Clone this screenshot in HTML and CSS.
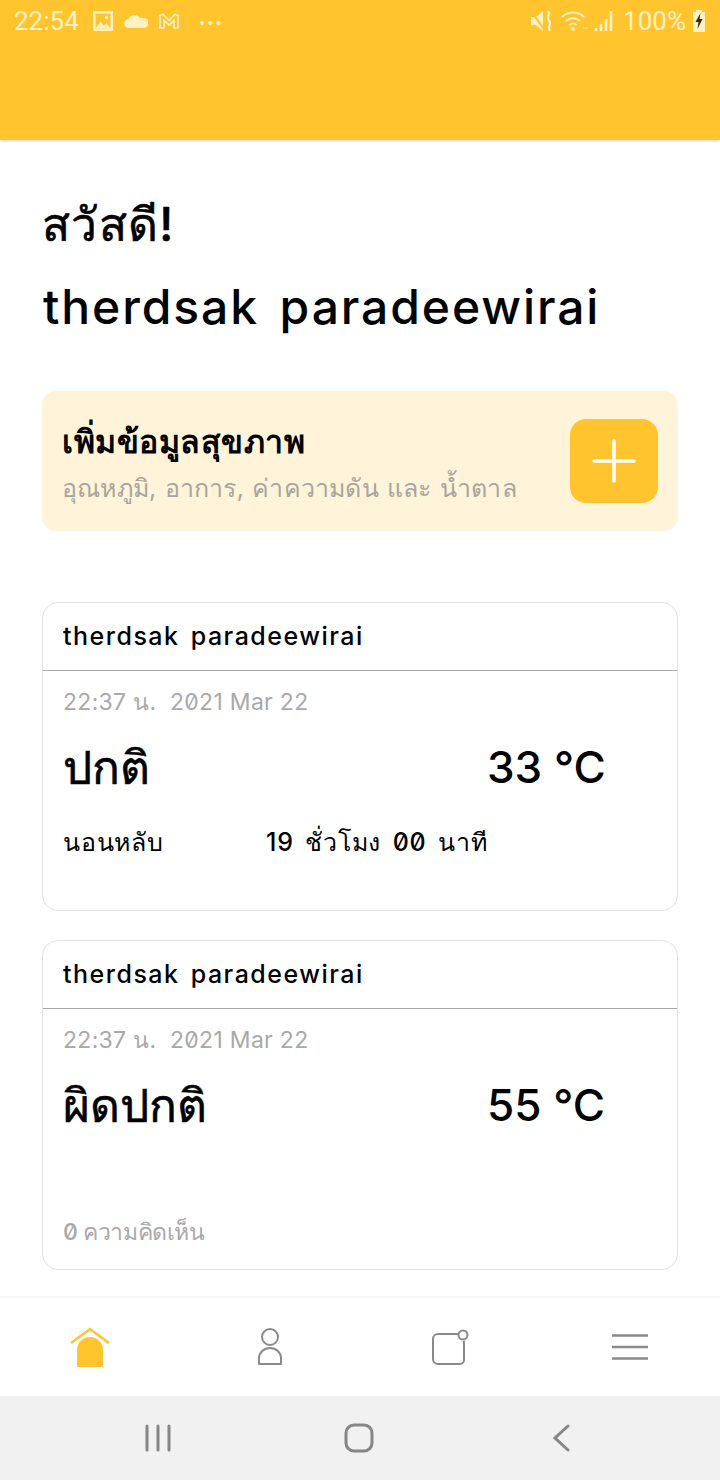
FILE: index.html
```html
<!DOCTYPE html>
<html lang="th">
<head>
  <meta charset="UTF-8">
  <meta name="viewport" content="width=device-width, initial-scale=1.0">
  <title>Health</title>
  <link rel="stylesheet" href="styles.css">
</head>
<body>
  <div class="topbar">
    <div class="status">
      <div class="status-left">
        <span class="clock">22:54</span>
        <svg class="ic" width="22" height="22" viewBox="0 0 22 22"><path d="M1 1h20v20H1z" fill="#fff1c4"/><path d="M3.500 3.500h15v15h-15z" fill="#ffc42e"/><path d="M3.500 18.500l5-7 3.500 4 2.500-2.500 4 5.500z" fill="#fff1c4"/><circle cx="14.500" cy="7.500" r="1.800" fill="#fff1c4"/></svg>
        <svg class="ic" width="24" height="14" viewBox="0 0 24 14"><path d="M5 14a4.500 4.500 0 0 1-.5-9A6.500 6.500 0 0 1 16 4a4 4 0 0 1 3 0 5 5 0 0 1 1 10z" fill="#fff1c4"/></svg>
        <svg class="ic" width="22" height="16" viewBox="0 0 22 16"><path d="M2 15V2.500l3-1 6 6 6-6 3 1V15h-4V7.500l-5 4.500-5-4.500V15z" fill="none" stroke="#fff1c4" stroke-width="1.700"/></svg>
        <span class="dots">•••</span>
      </div>
      <div class="status-right">
        <svg width="24" height="24" viewBox="0 0 24 24"><path d="M1 8h5l7-6v20l-7-6H1z" fill="#fff1c4"/><path d="M1 2l15 21" stroke="#ffc42e" stroke-width="2"/><path d="M18 2c3.500 3.500-2.500 5.500 1 9.500s-2.500 6 1 10.500" fill="none" stroke="#fff1c4" stroke-width="2.200"/></svg>
        <svg class="wifi" width="28" height="22" viewBox="0 0 28 22"><path d="M1 7a16 16 0 0 1 22 0M5 11a10.500 10.500 0 0 1 14 0M8.500 15a5 5 0 0 1 7 0" fill="none" stroke="#fff1c4" stroke-width="2"/><circle cx="12" cy="19" r="2" fill="#fff1c4"/><path d="M22 18h5" stroke="#ffe08a" stroke-width="1.500"/></svg>
        <svg width="20" height="22" viewBox="0 0 20 22"><path d="M2 21v-3M7 21v-7M12 21v-12M17 21V1" stroke="#fff1c4" stroke-width="2.600"/></svg>
        <span class="battery-text">100%</span>
        <svg class="battery" width="14" height="22" viewBox="0 0 14 22"><path d="M4 0h6v2h3v20H1V2h3z" fill="#fff1c4"/><path d="M8.500 3L3.500 12h3l-1 7 5-10h-3z" fill="#332b10"/></svg>
      </div>
    </div>
  </div>

  <main class="content">
    <h1 class="hello">สวัสดี!</h1>
    <h1 class="name">therdsak paradeewirai</h1>

    <div class="add-box">
      <div>
        <div class="add-title">เพิ่มข้อมูลสุขภาพ</div>
        <div class="add-sub">อุณหภูมิ, อาการ, ค่าความดัน และ น้ำตาล</div>
      </div>
      <div class="add-btn">
        <svg width="44" height="44" viewBox="0 0 44 44"><path d="M22 2v40M2 22h40" stroke="#fff" stroke-width="3.500" stroke-linecap="round"/></svg>
      </div>
    </div>

    <div class="card card-first">
      <div class="card-head">therdsak paradeewirai</div>
      <div class="card-body">
        <div class="date">22:37 น.&nbsp; 2021 Mar 22</div>
        <div class="reading">
          <span class="state">ปกติ</span>
          <span>33 °C</span>
        </div>
        <div class="sleep">
          <span class="sleep-label">นอนหลับ</span>
          <span>19 ชั่วโมง 00 นาที</span>
        </div>
      </div>
    </div>

    <div class="card card-second">
      <div class="card-head">therdsak paradeewirai</div>
      <div class="card-body">
        <div class="date">22:37 น.&nbsp; 2021 Mar 22</div>
        <div class="reading">
          <span class="state">ผิดปกติ</span>
          <span>55 °C</span>
        </div>
        <div class="comments">0 ความคิดเห็น</div>
      </div>
    </div>
  </main>

  <nav class="tabs">
    <svg width="40" height="40" viewBox="0 0 40 40"><path d="M1 16L20 2l19 14" fill="none" stroke="#ffc42e" stroke-width="2.500"/><path d="M7 40V23a13 13 0 0 1 26 0v17z" fill="#ffc42e"/></svg>
    <svg width="26" height="38" viewBox="0 0 26 38"><circle cx="13" cy="9" r="8" fill="none" stroke="#8a8a8a" stroke-width="2"/><path d="M2 36V30a11 10 0 0 1 22 0v6z" fill="none" stroke="#8a8a8a" stroke-width="2" stroke-linejoin="round"/></svg>
    <svg width="38" height="38" viewBox="0 0 38 38"><path d="M27 6H7a5 5 0 0 0-5 5v20a5 5 0 0 0 5 5h22a4 4 0 0 0 4-4V13" fill="none" stroke="#8a8a8a" stroke-width="2"/><circle cx="32" cy="7" r="4.500" fill="#fff" stroke="#8a8a8a" stroke-width="2"/></svg>
    <svg width="38" height="28" viewBox="0 0 38 28"><path d="M1 2.500h36M1 14h36M1 25.500h36" stroke="#8a8a8a" stroke-width="2.400"/></svg>
  </nav>

  <div class="sysnav">
    <svg width="28" height="28" viewBox="0 0 28 28"><path d="M3 2v24M14 2v24M25 2v24" stroke="#868686" stroke-width="3" stroke-linecap="round"/></svg>
    <svg width="30" height="30" viewBox="0 0 30 30"><rect x="2" y="2" width="26" height="26" rx="8" fill="none" stroke="#868686" stroke-width="3"/></svg>
    <svg class="back" width="20" height="28" viewBox="0 0 20 28"><path d="M16 2L3 14l13 12" fill="none" stroke="#868686" stroke-width="3" stroke-linecap="round"/></svg>
  </div>
</body>
</html>
```

FILE: styles.css
```css
* {
  margin: 0;
  padding: 0;
  box-sizing: border-box;
  font-family: Inter, "Noto Sans", "DejaVu Sans", sans-serif;
  font-feature-settings: "zero" 1;
}
body {
  width: 720px;
  height: 1480px;
  background-color: white;
  color: #000;
  display: flex;
  flex-direction: column;
  overflow: hidden;
}
.topbar {
  height: 140px;
  flex: none;
  background-color: #ffc42e;
  box-shadow: 0 1px 3px rgba(0, 0, 0, 0.2);
}
.status {
  height: 42px;
  padding: 0 14px;
  display: flex;
  justify-content: space-between;
  align-items: center;
  color: #fff1c4;
}
.status-left, .status-right {
  display: flex;
  align-items: center;
}
.clock {
  font-family: Roboto, sans-serif;
  font-size: 26px;
  margin-right: 13px;
}
.ic {
  margin-right: 10px;
}
.dots {
  font-size: 12px;
  letter-spacing: 1.500px;
  margin-left: 9px;
}
.status-right svg {
  margin-right: 7px;
}
.status-right .wifi {
  margin: 0 5px 0 0;
}
.status-right .battery {
  margin: 0 0 0 6px;
}
.battery-text {
  font-family: Roboto, sans-serif;
  font-size: 26px;
  margin-left: 2px;
}
.content {
  flex: 1;
  padding: 56px 42px 0;
}
.hello {
  font-size: 46px;
  font-weight: 500;
  line-height: 56px;
  letter-spacing: 1.300px;
  -webkit-text-stroke: 0.6px #000;
}
.name {
  font-size: 48px;
  font-weight: 500;
  line-height: 56px;
  margin: 27px 0 0 1px;
  letter-spacing: 1.900px;
  word-spacing: 6px;
}
.add-box {
  height: 140px;
  margin-top: 56px;
  padding: 0 20px;
  background-color: #fff4d9;
  border-radius: 14px;
  display: flex;
  justify-content: space-between;
  align-items: center;
}
.add-title {
  font-size: 32px;
  font-weight: 700;
  line-height: 40px;
  letter-spacing: 0.5px;
  margin-top: 6px;
}
.add-sub {
  font-size: 25px;
  line-height: 36px;
  margin-top: 8px;
  letter-spacing: 0.2px;
  word-spacing: 1px;
  color: #a8a59c;
}
.add-btn {
  width: 88px;
  height: 84px;
  background-color: #ffc42e;
  border-radius: 16px;
  display: flex;
  justify-content: center;
  align-items: center;
}
.card {
  border: 1px solid #e2e2e2;
  border-radius: 16px;
}
.card-first {
  height: 309px;
  margin-top: 71px;
}
.card-second {
  height: 330px;
  margin-top: 29px;
}
.card-head {
  height: 68px;
  padding: 0 20px;
  font-size: 25px;
  font-weight: 500;
  line-height: 67px;
  letter-spacing: 1.500px;
  word-spacing: 3px;
  border-bottom: 1px solid #a8a8a8;
}
.card-body {
  padding: 15px 20px 0;
}
.date {
  font-size: 23px;
  line-height: 32px;
  letter-spacing: 0.3px;
  color: #a9a9a9;
}
.reading {
  display: flex;
  margin-top: 20px;
  font-size: 44px;
  font-weight: 500;
  line-height: 58px;
}
.reading .state {
  width: 424px;
  font-size: 46px;
  -webkit-text-stroke: 0.6px #000;
}
.sleep {
  display: flex;
  margin-top: 28px;
  font-size: 25px;
  font-weight: 500;
  line-height: 36px;
  letter-spacing: 0.8px;
  word-spacing: 4px;
}
.sleep-label {
  width: 203px;
  flex: none;
}
.comments {
  margin-top: 82px;
  font-size: 23px;
  font-weight: 500;
  line-height: 32px;
  letter-spacing: -0.4px;
  color: #a9a9a9;
}
.tabs {
  height: 100px;
  flex: none;
  border-top: 2px solid #f8f8f8;
  display: grid;
  grid-template-columns: repeat(4, 180px);
  justify-items: center;
  align-items: center;
}
.sysnav {
  height: 84px;
  flex: none;
  background-color: #f1f1f1;
  padding-left: 144px;
  display: flex;
  gap: 172px;
  align-items: center;
}
.back {
  margin-left: 6px;
}
```
